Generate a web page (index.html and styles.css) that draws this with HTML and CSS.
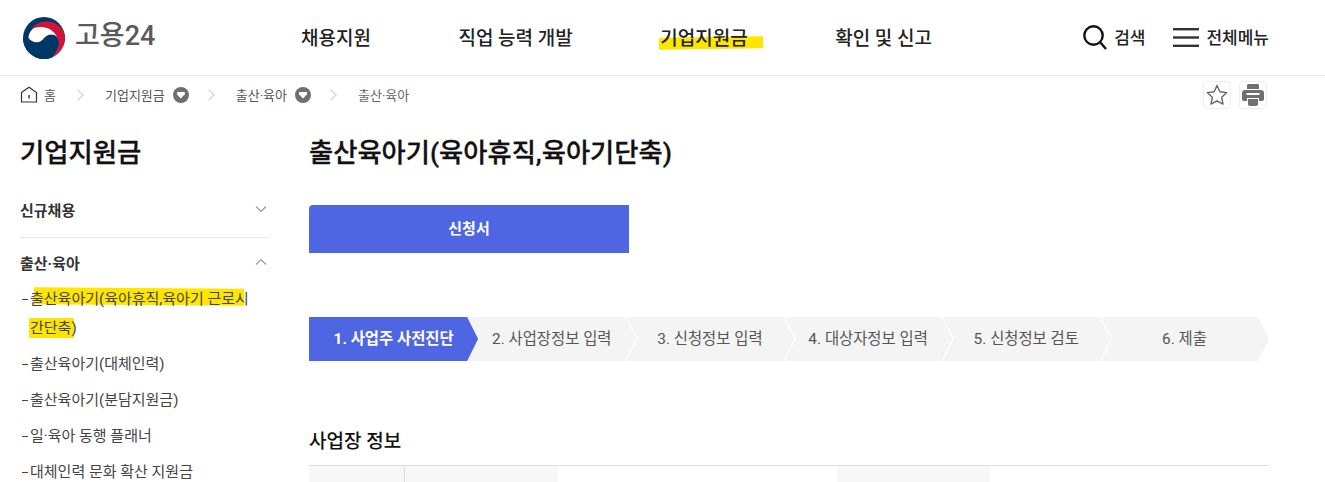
FILE: index.html
```html
<!DOCTYPE html>
<html lang="ko">
<head>
<meta charset="utf-8">
<title>고용24</title>
<link rel="stylesheet" href="styles.css">
</head>
<body>
<header class="top">
  <a class="logo">
    <svg class="logo-mark" width="42" height="42" viewBox="0 0 42 42">
      <defs><clipPath id="disc"><circle cx="21" cy="21" r="21"/></clipPath></defs>
      <g clip-path="url(#disc)">
        <rect width="42" height="42" fill="#003764"/>
        <path d="M5.500 22C5 15 11 8 20 8c8 0 15 6 16 16 .5 6-3 12-8 18L42 42V30L30 22 4 30z" fill="#fff"/>
        <path d="M8 12.500C12 7 18 4 25 4.500 34 5 42 12 42 21c0 9-6 17-13.500 20.500C33 36 36 30 35 24 34 16 27 10.500 19 10 15 10 11 10.500 8 12.500z" fill="#d2143a"/>
        <path d="M5.500 21c2.500 4 8.500 5.500 12.500 3 3.500-2.500 5-6.500 10-6.500 5 0 7.500 3.500 7.800 7.500.3 5-3 11-7.300 16L20 46 0 36V21z" fill="#003764"/>
      </g>
    </svg>
    <span class="logo-text">고용24</span>
  </a>
  <nav class="gnb">
    <a>채용지원</a>
    <a>직업 능력 개발</a>
    <a class="marked">기업지원금<i class="hl hl-gnb"></i></a>
    <a>확인 및 신고</a>
  </nav>
  <div class="util">
    <a class="util-search"><svg width="24" height="25" viewBox="0 0 24 25" fill="none" stroke="#111" stroke-width="2.400"><circle cx="10.500" cy="10.500" r="9.200"/><path d="M17 17l6 7"/></svg><span class="util-label">검색</span></a>
    <a class="util-menu"><svg width="26" height="19" viewBox="0 0 26 19" fill="#333"><rect y="0" width="26" height="2.400"/><rect y="8.300" width="26" height="2.400"/><rect y="16.600" width="26" height="2.400"/></svg><span class="util-label">전체메뉴</span></a>
  </div>
</header>

<div class="crumbs">
  <ol class="crumb-list">
    <li class="crumb-home"><svg width="18" height="17" viewBox="0 0 18 17" fill="none" stroke="#333" stroke-width="1.200"><path d="M1.500 6.500L9 1.200l7.500 5.300v9.500h-15z"/><path d="M9 9v3.500" stroke-width="1.400"/></svg>홈</li>
    <li class="sep"></li>
    <li>기업지원금<span class="drop"></span></li>
    <li class="sep"></li>
    <li>출산·육아<span class="drop"></span></li>
    <li class="sep"></li>
    <li class="crumb-last">출산·육아</li>
  </ol>
  <div class="crumb-tools">
    <button class="tool"><svg width="22" height="22" viewBox="0 0 22 22" fill="none" stroke="#666" stroke-width="1.400" stroke-linejoin="round"><path d="M11 1.500l2.900 6.300 6.800.8-5 4.700 1.300 6.800L11 16.800l-6 3.300 1.300-6.800-5-4.700 6.800-.8z"/></svg></button>
    <button class="tool"><svg width="22" height="22" viewBox="0 0 22 22" fill="#6f6f6f"><path d="M5 1.500C5 .7 5.700 0 6.500 0h9c.8 0 1.500.7 1.500 1.500V5H5z"/><path d="M3 6h16c1.700 0 3 1.300 3 3v6c0 1-.8 2-2 2h-3v-3H5v3H2c-1.200 0-2-1-2-2V9c0-1.700 1.300-3 3-3z"/><path d="M6 15h10v5c0 1-.8 2-2 2H8c-1.200 0-2-1-2-2z"/><rect x="4.500" y="9" width="13" height="2" fill="#fff"/></svg></button>
  </div>
</div>

<div class="layout">
  <aside class="side">
    <h2 class="side-title">기업지원금</h2>
    <div class="side-group side-closed">
      <span>신규채용</span>
      <svg width="12" height="8" viewBox="0 0 12 8" fill="none" stroke="#999" stroke-width="1.200"><path d="M1 1.500l5 5 5-5"/></svg>
    </div>
    <div class="side-group side-open">
      <span>출산·육아</span>
      <svg width="12" height="8" viewBox="0 0 12 8" fill="none" stroke="#999" stroke-width="1.200"><path d="M1 6.500l5-5 5 5"/></svg>
    </div>
    <ul class="side-list">
      <li class="marked-item"><i class="hl hl-side1"></i><i class="hl hl-side2"></i><span>출산육아기(육아휴직,육아기 근로시간단축)</span></li>
      <li><span>출산육아기(대체인력)</span></li>
      <li><span>출산육아기(분담지원금)</span></li>
      <li><span>일·육아 동행 플래너</span></li>
      <li><span>대체인력 문화 확산 지원금</span></li>
    </ul>
  </aside>
  <main class="main">
    <h1 class="page-title">출산육아기(육아휴직,육아기단축)</h1>
    <a class="apply">신청서</a>
    <ol class="steps">
      <li class="step step-on">1. 사업주 사전진단</li>
      <li class="step">2. 사업장정보 입력</li>
      <li class="step">3. 신청정보 입력</li>
      <li class="step">4. 대상자정보 입력</li>
      <li class="step">5. 신청정보 검토</li>
      <li class="step">6. 제출</li>
    </ol>
    <h3 class="section-title">사업장 정보</h3>
    <div class="info">
      <div class="info-th"></div>
      <div class="info-sub"></div>
      <div></div>
      <div class="info-sub"></div>
      <div></div>
    </div>
  </main>
</div>
</body>
</html>
```
FILE: styles.css
```css
* { box-sizing: border-box; margin: 0; padding: 0; }
html, body { height: 482px; overflow: hidden; background: #fff; }
body { font-family: Roboto, "Noto Sans CJK KR", "Noto Sans", sans-serif; color: #222; font-size: 14px; }
ul, ol { list-style: none; }
i { font-style: normal; }

.top { height: 76px; border-bottom: 1px solid #e8e8e8; display: flex; align-items: center; padding: 0 56px 0 23px; }
.logo { display: flex; align-items: center; gap: 10px; width: 278px; }
.logo-text { font-size: 27px; font-weight: 500; color: #5a5a5a; line-height: 1; padding-bottom: 3px; }
.gnb { display: flex; gap: 87.500px; flex: 1; font-size: 19px; font-weight: 500; color: #222; padding-bottom: 2px; }
.gnb a { position: relative; z-index: 0; }
.hl { position: absolute; background: #ffe600; z-index: -1; }
.hl-gnb { left: -1px; width: 104px; top: 14px; height: 12px; transform: rotate(-.7deg); }
.util { display: flex; align-items: center; gap: 28px; font-size: 17px; font-weight: 500; }
.util a { display: flex; align-items: center; gap: 7px; }
.util-search { gap: 8px; }
.util-label { padding-bottom: 2px; }

.crumbs { display: flex; justify-content: space-between; align-items: center; height: 38px; padding: 0 58px 0 20px; }
.crumb-list { display: flex; align-items: center; font-size: 13px; color: #555; padding-bottom: 1px; }
.crumb-list li { display: flex; align-items: center; }
.crumb-home { gap: 6px; margin-right: 2px; }
.sep { width: 8px; height: 8px; border-top: 1px solid #ccc; border-right: 1px solid #ccc; transform: rotate(45deg); margin: 0 23px 0 16px; }
.drop { width: 16px; height: 16px; border-radius: 50%; background: #6f6f6f; margin-left: 8px; position: relative; }
.drop::after { content: ""; position: absolute; left: 4px; top: 5px; width: 8px; height: 7px; background: #fff; clip-path: polygon(0 0, 100% 0, 100% 40%, 50% 100%, 0 40%); }
.crumb-last { color: #666; }
.crumb-tools { display: flex; gap: 8px; }
.tool { width: 28px; height: 28px; background: #fff; border: 1px solid #eee; border-radius: 4px; display: flex; align-items: center; justify-content: center; }

.layout { display: flex; gap: 40px; padding: 0 56px 0 20px; }
.side { width: 249px; flex: none; }
.side-title { font-size: 26.400px; font-weight: 500; -webkit-text-stroke: .3px #111; color: #111; line-height: 38px; margin-top: 20px; }
.side-group { display: flex; justify-content: space-between; align-items: center; font-size: 15px; font-weight: 700; color: #333; padding-right: 2px; }
.side-closed { height: 58px; margin-top: 8px; border-bottom: 1px solid #e8e8e8; padding-top: 1px; }
.side-open { height: 47px; padding-top: 1px; }
.side-list { font-size: 15px; color: #444; padding-right: 10px; }
.side-list li { position: relative; z-index: 0; padding-left: 10px; line-height: 29px; margin-bottom: 7px; }
.side-list li::before { content: ""; position: absolute; left: 2px; top: 14px; width: 6px; height: 1px; background: #444; }
.hl-side1 { left: 14px; top: 3px; width: 210px; height: 17px; transform: rotate(.4deg); }
.hl-side2 { left: 9px; top: 33px; width: 45px; height: 20px; }

.main { width: 960px; flex: none; }
.page-title { font-size: 26.300px; font-weight: 500; -webkit-text-stroke: .3px #111; color: #111; line-height: 38px; margin-top: 20px; }
.apply { display: flex; width: 320px; height: 48px; margin-top: 33px; padding-bottom: 4px; border-radius: 4px 0 0 0; background: #4f66e3; color: #fff; font-size: 15px; font-weight: 700; align-items: center; justify-content: center; }
.steps { display: flex; margin-top: 64px; height: 44px; }
.step { flex: 1; margin-left: -11px; padding-bottom: 5px; background: #f4f4f4; color: #555; font-size: 15.400px; display: flex; align-items: center; justify-content: center; clip-path: polygon(1px 0, calc(100% - 11px) 0, 100% 50%, calc(100% - 11px) 100%, 1px 100%, 12px 50%); }
.step:first-child { margin-left: 0; }
.step-on { background: #4f66e3; color: #fff; font-weight: 700; clip-path: polygon(0 0, calc(100% - 11px) 0, 100% 50%, calc(100% - 11px) 100%, 0 100%); }
.section-title { font-size: 19px; font-weight: 500; color: #111; line-height: 26px; margin-top: 68px; }
.info { display: grid; grid-template-columns: 96px 153px 279px 153px 1fr; height: 60px; margin-top: 10px; border-top: 1px solid #ddd; }
.info-th { background: #f7f7f7; border-right: 1px solid #ddd; }
.info-sub { background: #f7f7f7; }
```
